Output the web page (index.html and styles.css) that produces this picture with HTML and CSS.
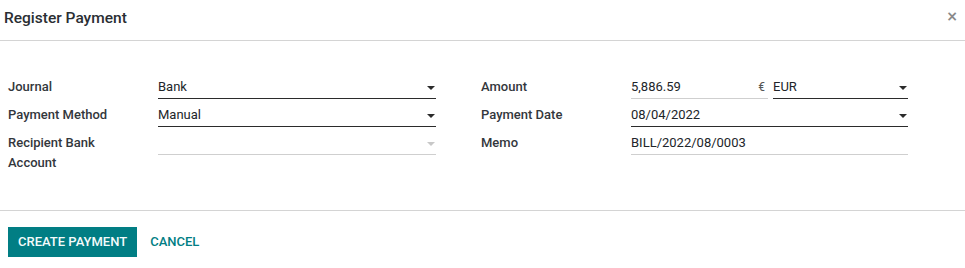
FILE: index.html
```html
<!DOCTYPE html>
<html>
<head>
<meta charset="utf-8">
<link rel="stylesheet" href="styles.css">
</head>
<body>
<div class="dialog">
  <header class="dialog-header">
    <h4 class="dialog-title">Register Payment</h4>
    <button class="close" type="button">×</button>
  </header>
  <main class="dialog-body">
    <div class="group">
      <div class="label">Journal</div>
      <div class="field select"><span class="value">Bank</span><span class="caret"></span></div>
      <div class="label">Payment Method</div>
      <div class="field select"><span class="value">Manual</span><span class="caret"></span></div>
      <div class="label">Recipient Bank Account</div>
      <div class="field select empty"><span class="value"></span><span class="caret"></span></div>
    </div>
    <div class="group">
      <div class="label">Amount</div>
      <div class="monetary">
        <div class="field amount"><span class="value">5,886.59</span><span class="cur">€</span></div>
        <div class="field select currency"><span class="value">EUR</span><span class="caret"></span></div>
      </div>
      <div class="label">Payment Date</div>
      <div class="field select"><span class="value">08/04/2022</span><span class="caret"></span></div>
      <div class="label">Memo</div>
      <div class="field text"><span class="value">BILL/2022/08/0003</span></div>
    </div>
  </main>
  <footer class="dialog-footer">
    <button class="btn btn-primary" type="button">Create Payment</button>
    <button class="btn btn-link" type="button">Cancel</button>
  </footer>
</div>
</body>
</html>
```
FILE: styles.css
```css
* { box-sizing: border-box; }
html, body { margin: 0; padding: 0; background: #fff; }
body {
  font-family: Roboto, "Noto Sans", sans-serif;
  font-size: 13px;
  line-height: 20px;
  color: #212529;
}
.dialog { width: 965px; }
.dialog-header {
  height: 41px;
  border-bottom: 1px solid #d4d4d4;
  display: flex;
  align-items: center;
  justify-content: space-between;
  padding: 0 7px 0 4px;
}
.dialog-title {
  margin: 0;
  font-family: Roboto, sans-serif;
  font-size: 15.5px;
  font-weight: 500;
  line-height: 20px;
  color: #2a2e33;
  padding-bottom: 4px;
}
.close {
  border: 0;
  background: none;
  padding: 0;
  font-family: "DejaVu Sans", sans-serif;
  font-size: 14px;
  font-weight: bold;
  color: #8a8a8a;
  line-height: 20px;
  margin-bottom: 8px;
}
.dialog-body {
  height: 169px;
  padding: 36px 8px 0 8px;
  display: flex;
  align-items: flex-start;
  gap: 45px;
}
.group {
  display: grid;
  grid-template-columns: 150px 278px;
  row-gap: 6px;
  align-items: start;
  align-content: start;
}
.group + .group { grid-template-columns: 150px 277px; }
.label {
  font-weight: 500;
  color: #33373c;
  padding-right: 16px;
  line-height: 20px;
}
.field {
  height: 22px;
  border-bottom: 1px solid #2b2b2b;
  display: flex;
  align-items: flex-start;
  justify-content: space-between;
}
.field.empty, .field.text, .field.amount { border-bottom-color: #cfcfcf; }
.caret {
  width: 0; height: 0;
  border-left: 4px solid transparent;
  border-right: 4px solid transparent;
  border-top: 4px solid #2b2b2b;
  margin-top: 9px;
  margin-right: 1px;
}
.field.empty .caret { border-top-color: #c8c8c8; }
.monetary {
  display: flex;
  gap: 5px;
}
.field.amount { width: 137px; }
.field.currency { width: 135px; }
.cur { color: #555; font-size: 12px; padding-right: 3px; }
.dialog-footer {
  border-top: 1px solid #d4d4d4;
  padding: 16px 8px;
  display: flex;
  align-items: center;
  gap: 3px;
}
.btn {
  font-family: Roboto, sans-serif;
  font-size: 13px;
  font-weight: 500;
  text-transform: uppercase;
  border: 0;
  height: 30px;
  padding: 0 10px;
  line-height: 30px;
  cursor: pointer;
}
.btn-primary { background: #017e84; color: #f4fbfb; }
.btn-link { background: none; color: #017e84; }
```
